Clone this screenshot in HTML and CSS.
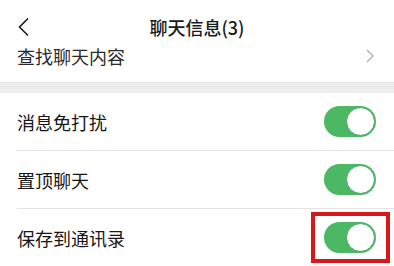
FILE: index.html
```html
<!DOCTYPE html>
<html lang="zh-CN">
<head>
<meta charset="utf-8">
<title>聊天信息</title>
<link rel="stylesheet" href="styles.css">
</head>
<body>
<div class="page">
  <header class="topbar">
    <span class="back">
      <svg width="12" height="20" viewBox="0 0 12 20"><polyline points="10,1.5 1.5,10 10,18.5" fill="none" stroke="#1a1a1a" stroke-width="1.6" stroke-linejoin="miter"/></svg>
    </span>
    <h1 class="title">聊天信息(3)</h1>
    <span></span>
  </header>
  <div class="search-row">
    <span class="search-label">查找聊天内容</span>
    <svg class="chev" width="8" height="14" viewBox="0 0 8 14"><polyline points="1,1 7,7 1,13" fill="none" stroke="#b4b4b4" stroke-width="1.5"/></svg>
  </div>
  <div class="gap"></div>
  <div class="group">
    <div class="row">
      <span class="label">消息免打扰</span>
      <span class="switch"><span class="knob"></span></span>
    </div>
    <div class="row">
      <span class="label">置顶聊天</span>
      <span class="switch"><span class="knob"></span></span>
    </div>
    <div class="row">
      <span class="label">保存到通讯录</span>
      <span class="switch marked"><span class="knob"></span></span>
    </div>
  </div>
</div>
</body>
</html>
```
FILE: styles.css
```css
html, body {
  margin: 0;
  padding: 0;
  background: #ffffff;
}
body {
  font-family: "Noto Sans CJK SC", "Noto Sans", sans-serif;
  color: #161616;
}
.page {
  width: 394px;
  height: 266px;
  overflow: hidden;
  background: #ffffff;
}
.topbar {
  height: 46px;
  display: grid;
  grid-template-columns: 1fr auto 1fr;
  align-items: center;
  padding-top: 7px;
  box-sizing: border-box;
  position: relative;
  z-index: 2;
  background: #ffffff;
}
.back {
  display: flex;
  padding-left: 18px;
}
.title {
  margin: 0;
  font-size: 18px;
  font-weight: 500;
  line-height: 24px;
  color: #1a1a1a;
}
.search-row {
  height: 36px;
  display: flex;
  align-items: center;
  justify-content: space-between;
  padding: 0 20px 0 17px;
  overflow: hidden;
}
.search-label {
  font-size: 18px;
  line-height: 24px;
  margin-top: -17px;
  color: #2a2a2a;
}
.chev {
  margin-top: -17px;
}
.gap {
  height: 11px;
  background: #ededed;
  border-top: 1px solid #e4e4e4;
  box-sizing: border-box;
}
.group {
  background: #ffffff;
}
.row {
  height: 57px;
  display: flex;
  align-items: center;
  justify-content: space-between;
  padding: 0 18px 0 17px;
  position: relative;
}
.row + .row {
  border-top: 1px solid #e3e3e3;
  margin-left: 17px;
  padding-left: 0;
}
.label {
  font-size: 18px;
  line-height: 24px;
  color: #161616;
}
.switch {
  width: 52px;
  height: 31px;
  border-radius: 16px;
  background: #4cb863;
  display: flex;
  justify-content: flex-end;
  align-items: center;
  padding-right: 1px;
  box-sizing: border-box;
  position: relative;
}
.knob {
  width: 29px;
  height: 29px;
  border-radius: 50%;
  background: #ffffff;
  box-sizing: border-box;
  border: 1.5px solid #44a35a;
}
.switch.marked::after {
  content: "";
  position: absolute;
  left: -13px;
  right: -14px;
  top: -10px;
  bottom: -10px;
  border: 4px solid #d8161c;
}
```
